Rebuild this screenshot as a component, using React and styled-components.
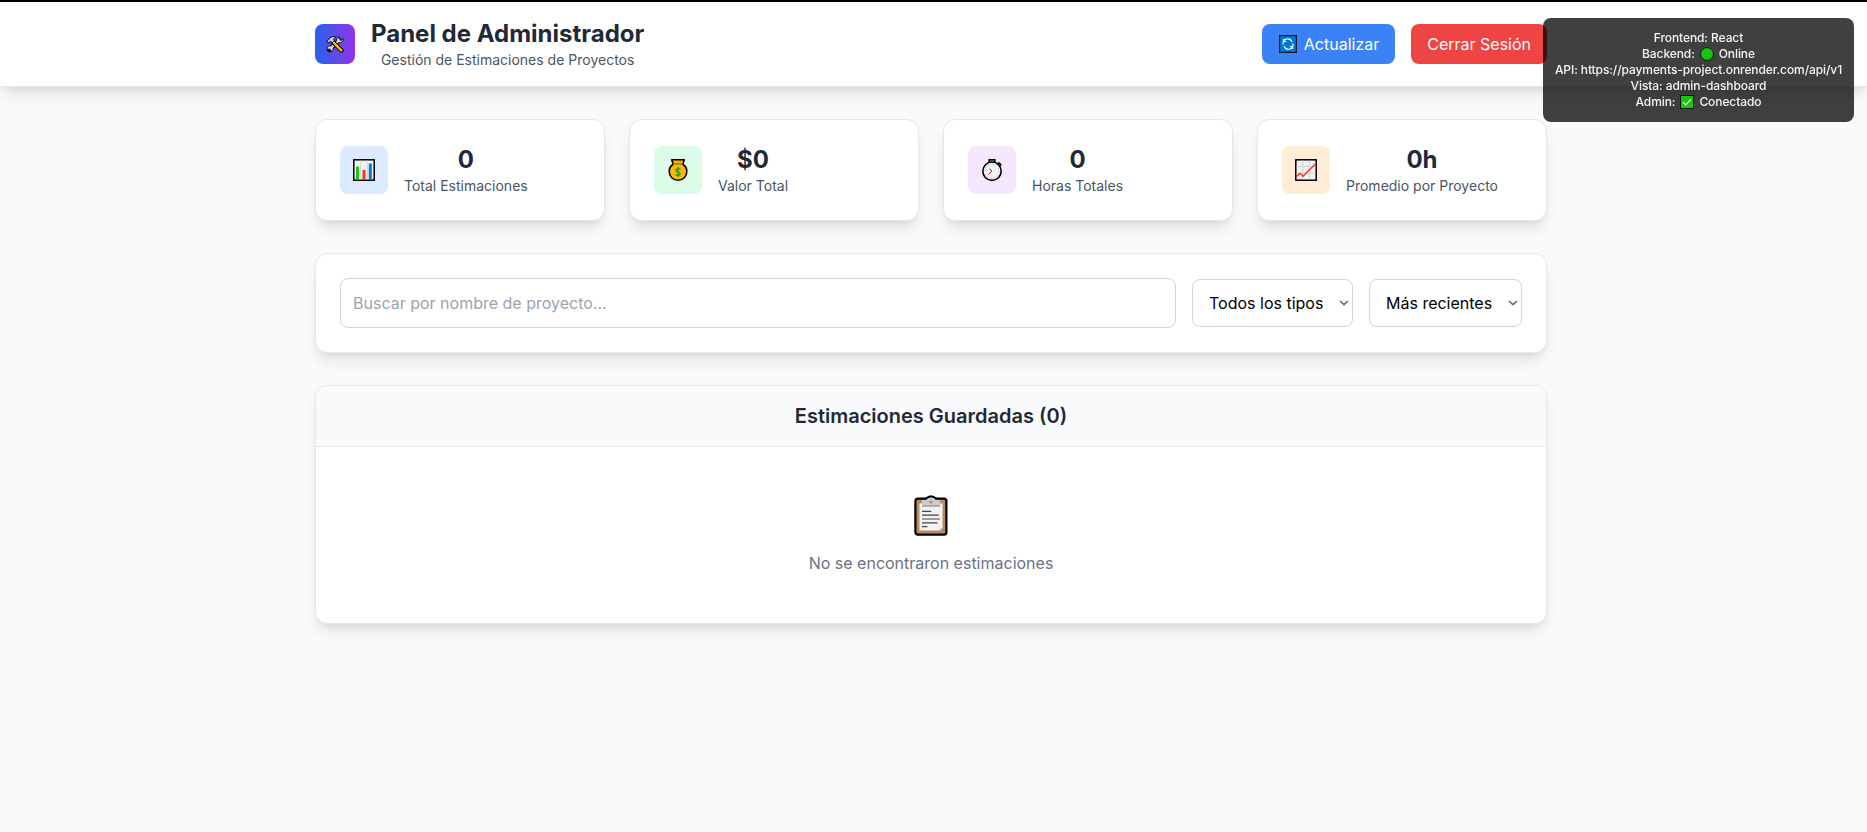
import React from "react";
import styled, { createGlobalStyle } from "styled-components";

const GlobalStyle = createGlobalStyle`
  *, *::before, *::after { box-sizing: border-box; margin: 0; padding: 0; }
  html { background: #f9fafb; }
  body {
    margin: 0;
    font-family: Inter, "Liberation Sans", sans-serif;
    font-size: 16px;
    line-height: 24px;
    text-align: center;
    color: #1f2937;
    overflow: hidden;
  }
  svg { display: block; flex: none; }
`;

const Page = styled.div`
  min-height: 100vh;
  background: #f9fafb;
  border-top: 2px solid #000;
`;

const cardShadow = "0 10px 15px -3px rgba(0,0,0,0.1), 0 4px 6px -4px rgba(0,0,0,0.1)";

const Header = styled.header`
  padding-right: 5px;
  background: #fff;
  border-bottom: 1px solid #e5e7eb;
  box-shadow: ${cardShadow};
`;

const Container = styled.div`
  width: 1280px;
  margin: 0 auto;
  padding: ${(p) => p.$pad};
`;

const HeaderRow = styled(Container)`
  display: flex;
  align-items: center;
  justify-content: space-between;
`;

const Group = styled.div`
  display: flex;
  align-items: center;
  gap: 16px;
`;

const Logo = styled.div`
  width: 40px;
  height: 40px;
  border-radius: 8px;
  background: linear-gradient(to right, #2563eb, #9333ea);
  display: grid;
  place-items: center;
`;

const Title = styled.h1`
  font-size: 24px;
  line-height: 32px;
  font-weight: 700;
`;

const Caption = styled.p`
  font-size: 14px;
  line-height: 20px;
  color: #4b5563;
`;

const Button = styled.button`
  display: flex;
  align-items: center;
  gap: 7px;
  height: 40px;
  padding: 0 16px;
  border: 0;
  border-radius: 8px;
  background: ${(p) => p.$bg};
  color: #fff;
  font: 400 16px/24px Inter, sans-serif;

  svg { margin-left: 1px; }
`;

const Main = styled.main`
  padding-right: 5px;
`;

const Content = styled(Container)`
  display: flex;
  flex-direction: column;
  gap: 32px;
`;

const Stats = styled.section`
  display: grid;
  grid-template-columns: repeat(4, 1fr);
  gap: 24px;
`;

const Card = styled.div`
  background: #fff;
  border: 1px solid #e5e7eb;
  border-radius: 12px;
  box-shadow: ${cardShadow};
`;

const StatCard = styled(Card)`
  display: flex;
  align-items: center;
  gap: 16px;
  padding: 24px;
`;

const StatIcon = styled.div`
  width: 48px;
  height: 48px;
  border-radius: 8px;
  background: ${(p) => p.$bg};
  display: grid;
  place-items: center;
`;

const StatValue = styled.p`
  font-size: 24px;
  line-height: 32px;
  font-weight: 700;
`;

const Filters = styled(Card)`
  display: flex;
  align-items: center;
  gap: 16px;
  padding: 24px;
`;

const SearchInput = styled.input`
  flex: 1;
  height: 50px;
  padding: 0 12px;
  border: 1px solid #d1d5db;
  border-radius: 8px;
  background: #fff;
  font: 400 16px/24px Inter, sans-serif;
  &::placeholder { color: #9ca3af; opacity: 1; }
`;

const SelectBox = styled.button`
  display: flex;
  align-items: center;
  justify-content: space-between;
  width: ${(p) => p.$w};
  height: 48px;
  padding: 0 3px 0 16px;
  border: 1px solid #d1d5db;
  border-radius: 8px;
  background: #fff;
  color: #000;
  font: 400 16px/24px Inter, sans-serif;
`;

const ListCard = styled(Card)`
  overflow: hidden;
`;

const ListHeader = styled.h2`
  padding: 16px 24px;
  border-bottom: 1px solid #e5e7eb;
  background: #f9fafb;
  font-size: 20px;
  line-height: 28px;
  font-weight: 600;
`;

const Empty = styled.div`
  display: flex;
  flex-direction: column;
  align-items: center;
  gap: 16px;
  padding: 48px;
  color: #6b7280;
`;

const StatusPanel = styled.aside`
  position: fixed;
  top: 18px;
  right: 13px;
  width: 311px;
  padding: 12px;
  border-radius: 8px;
  background: rgba(0, 0, 0, 0.75);
  color: #f4f4f4;
  font-size: 12px;
  font-weight: 500;
  letter-spacing: -0.09px;
  line-height: 16px;
  white-space: nowrap;
`;

const StatusLine = styled.div`
  display: flex;
  justify-content: center;
  align-items: center;
  gap: 5px;
  height: 16px;
`;

const ToolsIcon = () => (
  <svg width="18" height="18" viewBox="0 0 18 18" strokeLinecap="round" strokeLinejoin="round">
    <path d="M3.2 15 L13 5" stroke="#000" strokeWidth="4.2" />
    <path d="M12.2 1.6a3.6 3.6 0 0 0-1.1 4.8l1.3 1.2a3.6 3.6 0 0 0 4.7-4l-2 1.7-1.6-.4-.4-1.5z" fill="#dcdcdc" stroke="#000" strokeWidth="0.9" />
    <path d="M1.2 12.2a3 3 0 0 1 4.1-1l1.6 1.5a3 3 0 0 1-2.2 4.3l.3-2-1.4-1-2.2.5z" fill="#dcdcdc" stroke="#000" strokeWidth="0.9" />
    <path d="M4.8 13.2 L13 5.2" stroke="#dcdcdc" strokeWidth="2.3" />
    <path d="M7.2 7.2 L15.6 15.6" stroke="#000" strokeWidth="4.2" />
    <path d="M7 7 L9.4 9.4" stroke="#d0d0d0" strokeWidth="2" />
    <path d="M9.6 9.6 L15.4 15.4" stroke="#ffb900" strokeWidth="2.5" />
    <path d="M1 6.3 4.6 2.4Q7 .8 9.8 1.8L7.7 4l.6 1.8-2 2-1.8-1.6-1.3 1.6z" fill="#d4d4d4" stroke="#000" strokeWidth="0.9" />
  </svg>
);

const RefreshIcon = () => (
  <svg width="18" height="18" viewBox="0 0 18 18" fill="none">
    <rect x="0.6" y="0.6" width="16.8" height="16.8" fill="#0078d7" stroke="#0b1b33" strokeWidth="1.2" />
    <path d="M4 9.4V8.4a4.6 4.6 0 0 1 8.9-1.5M14 8.6v1a4.6 4.6 0 0 1-8.9 1.7" stroke="#fff" strokeWidth="1.1" />
    <path d="M4.7 4v2.5h2.6M13.6 14v-2.5h-2.7" stroke="#fff" strokeWidth="1.1" />
  </svg>
);

const BarsIcon = () => (
  <svg width="22" height="22" viewBox="0 0 22 22">
    <rect x="0.8" y="0.8" width="20.4" height="20.4" fill="#f2f2f2" stroke="#000" strokeWidth="1.5" />
    <path d="M7.7 1.6v18.8M14.3 1.6v18.8" stroke="#d2d2d2" />
    <path d="M4.5 7.5V20.4" stroke="#16c60c" strokeWidth="3" />
    <path d="M11 11V20.4" stroke="#f03a17" strokeWidth="3" />
    <path d="M17.3 4.5V20.4" stroke="#0078d7" strokeWidth="3" />
  </svg>
);

const MoneyIcon = () => (
  <svg width="22" height="24" viewBox="0 0 22 24" strokeLinejoin="round">
    <path d="M4.7 1.8h12.6l-1.5 4.5c2.6 1.5 4 3.9 4 7.2a8.8 8.8 0 0 1-17.6 0c0-3.3 1.5-5.7 4-7.2z" fill="#ffb900" stroke="#000" strokeWidth="1.6" />
    <path d="M6 5.9h10" stroke="#8e562e" strokeWidth="1.2" />
    <path d="M7 3h8" stroke="#a66a00" strokeWidth="0.8" strokeDasharray="1 1" />
    <path d="M13.2 11.6c-.5-1.2-4.3-1.5-4.3.6 0 2.3 4.3 1.4 4.3 3.6 0 2-3.7 2-4.5.4M11.1 9v10" fill="none" stroke="#10a010" strokeWidth="1.3" />
  </svg>
);

const WatchIcon = () => (
  <svg width="22" height="24" viewBox="0 0 22 24" fill="none">
    <path d="M16.2 5.4l2-.2 1.5 1.3-.3 1.7" fill="#777" stroke="#000" strokeWidth="1.6" />
    <path d="M8.2 4.2V1.7h5.6v2.5" fill="#999" stroke="#000" strokeWidth="1.6" />
    <circle cx="11" cy="13.2" r="9.2" fill="#f2f2f2" stroke="#000" strokeWidth="1.6" />
    <circle cx="11" cy="13.2" r="7" stroke="#bbb" strokeWidth="1" strokeDasharray="1 2.66" />
    <path d="M8.4 10.8l2.5 2.4" stroke="#333" />
    <path d="M10.9 13.2l-3.3 3.2" stroke="#e81224" />
  </svg>
);

const TrendIcon = () => (
  <svg width="22" height="22" viewBox="0 0 22 22" fill="none">
    <rect x="0.8" y="0.8" width="20.4" height="20.4" fill="#f2f2f2" stroke="#000" strokeWidth="1.5" />
    <path d="M7.7 1.6v18.8M14.3 1.6v18.8M1.6 7.5h18.8M1.6 14.2h18.8" stroke="#d2d2d2" />
    <path d="M1.5 17.8 5 14.3l3 2.9L20.6 4.8" stroke="#f03a17" strokeWidth="1.4" />
  </svg>
);

const ClipboardIcon = () => (
  <svg width="34" height="40" viewBox="0 -0.6 34 40" overflow="visible">
    <rect x="1.4" y="3" width="31" height="36" rx="2.4" fill="#b98c5f" stroke="#000" strokeWidth="2.2" />
    <path d="M5.5 8h23v24.5l-2.5 2.5H5.5z" fill="#f2f2f2" />
    <path d="M25.5 35v-2.4h3z" fill="#ccc" />
    <path d="M11.8 3.2Q17-1.4 22.2 3.2" fill="#ccc" stroke="#000" strokeWidth="2.2" />
    <path d="M8 11V5.4Q8 4.4 9 4.4h3.4Q13.4 1.8 17 1.8t4.6 2.6H25q1 0 1 1V11z" fill="#ccc" />
    <path d="M8 10.4h18" stroke="#888" strokeWidth="1.2" />
    <circle cx="17" cy="6.4" r="1.6" fill="#b98c5f" />
    <path d="M8 15.8h9.3M8 19.6h16.8M8 23.4h18M8 27.3h15.6M8 31h5.4" stroke="#444" strokeWidth="1.2" />
  </svg>
);

const Chevron = () => (
  <svg width="10" height="6" viewBox="0 0 10 6" fill="none">
    <path d="M1 1l4 3.7L9 1" stroke="#6b6b6b" strokeWidth="1.6" />
  </svg>
);

const OnlineDot = () => (
  <svg width="14" height="14" viewBox="0 0 14 14">
    <circle cx="7" cy="7" r="6.4" fill="#16c60c" stroke="#111" strokeWidth="0.9" />
  </svg>
);

const CheckIcon = () => (
  <svg width="14" height="14" viewBox="0 0 14 14" fill="none">
    <rect x="0.5" y="0.5" width="13" height="13" fill="#16c60c" stroke="#111" />
    <path d="M3 7.2l2.6 2.6L11 4.4" stroke="#fff" strokeWidth="1.2" />
  </svg>
);

const stats = [
  { label: "Total Estimaciones", value: "0", bg: "#dbeafe", Icon: BarsIcon },
  { label: "Valor Total", value: "$0", bg: "#dcfce7", Icon: MoneyIcon },
  { label: "Horas Totales", value: "0", bg: "#f3e8ff", Icon: WatchIcon },
  { label: "Promedio por Proyecto", value: "0h", bg: "#ffedd5", Icon: TrendIcon },
];

export default function App() {
  return (
    <Page>
      <GlobalStyle />
      <Header>
        <HeaderRow $pad="16px 24px">
          <Group>
            <Logo><ToolsIcon /></Logo>
            <div>
              <Title>Panel de Administrador</Title>
              <Caption>Gestión de Estimaciones de Proyectos</Caption>
            </div>
          </Group>
          <Group>
            <Button $bg="#3b82f6"><RefreshIcon />Actualizar</Button>
            <Button $bg="#ef4444">Cerrar Sesión</Button>
          </Group>
        </HeaderRow>
      </Header>
      <Main>
        <Content $pad="32px 24px">
          <Stats>
            {stats.map(({ label, value, bg, Icon }) => (
              <StatCard key={label}>
                <StatIcon $bg={bg}><Icon /></StatIcon>
                <div>
                  <StatValue>{value}</StatValue>
                  <Caption>{label}</Caption>
                </div>
              </StatCard>
            ))}
          </Stats>
          <Filters>
            <SearchInput placeholder="Buscar por nombre de proyecto..." />
            <SelectBox $w="161px">Todos los tipos<Chevron /></SelectBox>
            <SelectBox $w="153px">Más recientes<Chevron /></SelectBox>
          </Filters>
          <ListCard>
            <ListHeader>Estimaciones Guardadas (0)</ListHeader>
            <Empty>
              <ClipboardIcon />
              <p>No se encontraron estimaciones</p>
            </Empty>
          </ListCard>
        </Content>
      </Main>
      <StatusPanel>
        <StatusLine>Frontend: React</StatusLine>
        <StatusLine>Backend: <OnlineDot /> Online</StatusLine>
        <StatusLine>API: https://payments-project.onrender.com/api/v1</StatusLine>
        <StatusLine>Vista: admin-dashboard</StatusLine>
        <StatusLine>Admin: <CheckIcon /> Conectado</StatusLine>
      </StatusPanel>
    </Page>
  );
}
